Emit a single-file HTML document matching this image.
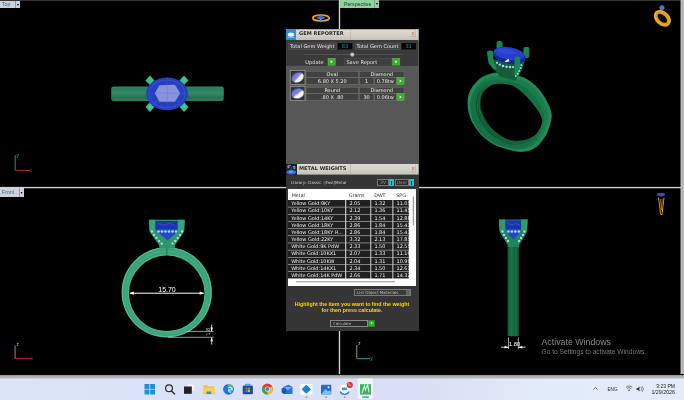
<!DOCTYPE html>
<html>
<head>
<meta charset="utf-8">
<title>Gem Reporter</title>
<style>
html,body{margin:0;padding:0;background:#000;}
body{width:684px;height:400px;overflow:hidden;position:relative;font-family:"Liberation Sans","DejaVu Sans",sans-serif;}
.abs{position:absolute;}
#scene{position:absolute;left:0;top:0;width:684px;height:400px;}
.vlabel{position:absolute;height:7px;font-size:5.2px;line-height:7px;color:#59616a;filter:blur(0.4px);background:#c9d3dc;padding-left:2px;box-sizing:border-box;white-space:nowrap;}
.vlabel i{position:absolute;right:0;top:0;width:5px;height:100%;border-left:1px solid #8e98a2;box-sizing:border-box;font-style:normal;font-size:4px;text-align:center;color:#000;}
/* panel */
#gem{position:absolute;left:286px;top:29px;width:132.5px;height:135px;background:#575757;}
#panels{position:absolute;left:0;top:0;width:684px;height:375px;filter:blur(0.35px);}
#metal{position:absolute;left:286px;top:164px;width:132.5px;height:167.3px;background:#353535;}
.tbar{position:absolute;left:0;top:0;width:133px;height:12px;}
.tbar .ic{position:absolute;left:0;top:0;width:10px;height:11px;background:#3a8fd0;}
.tbar b{position:absolute;left:13px;top:1px;font-size:5.05px;letter-spacing:0.05px;line-height:6px;color:#2a2a2a;font-weight:bold;white-space:nowrap;font-family:"DejaVu Sans","Liberation Sans",sans-serif;}
.tbar .tsplit{display:none;}
.tbar .cl{position:absolute;left:125px;top:2.3px;width:5.4px;height:5.8px;font-size:5.6px;line-height:5px;text-align:center;color:#d2514e;border-bottom:0.8px solid #c9a9a0;border-right:0.8px solid #c9b5ac;box-sizing:border-box;}
.lb{position:absolute;height:8px;line-height:7px;font-size:5.05px;color:#e4e4e4;background:#404040;border:1px solid #4e4e4e;box-sizing:border-box;white-space:nowrap;text-align:center;font-family:"DejaVu Sans","Liberation Sans",sans-serif;}
.val{position:absolute;height:8px;line-height:8px;font-size:5.05px;color:#2fa9b8;background:#050505;box-sizing:border-box;text-align:center;font-family:"DejaVu Sans",sans-serif;}
.gb{position:absolute;width:7px;height:8px;background:#36b32b;box-sizing:border-box;border:1px solid #2a8a22;}
.gb:after{content:"";position:absolute;left:1.8px;top:1px;width:0;height:0;border-left:2.2px solid #e6f8e0;border-top:1.5px solid transparent;border-bottom:1.5px solid transparent;}
.cb{position:absolute;width:5px;height:7px;background:#35b6c4;}
.cb:after{content:"";position:absolute;left:1.9px;top:1.5px;width:1.2px;height:4px;background:#0d3d55;}
.cell{position:absolute;height:8px;line-height:6.5px;font-size:5.0px;color:#ededed;background:#444;border:1px solid #6a6a6a;box-sizing:border-box;text-align:center;white-space:nowrap;font-family:"DejaVu Sans",sans-serif;}
.gicon{position:absolute;width:16px;height:16px;background:#2d2d2d;border:1px solid #9a9a9a;box-sizing:border-box;}
/* table */
#tbl{position:absolute;left:2.2px;top:25.2px;width:128.2px;height:96.4px;background:#fff;overflow:hidden;}
#tbl .hd{position:absolute;top:2.5px;font-size:4.8px;line-height:8px;color:#333;font-family:"DejaVu Sans",sans-serif;}
.row{position:absolute;left:0;width:121.5px;height:6.8px;}
.row span{position:absolute;top:0;height:6.8px;color:#f2f2f2;font-size:4.95px;line-height:6.6px;white-space:nowrap;overflow:hidden;box-sizing:border-box;padding-left:3px;font-family:"DejaVu Sans",sans-serif;}
.c1{left:0;width:57.3px;}
.c2{left:58.2px;width:24.2px;}
.c3{left:83.2px;width:21.3px;}
.c4{left:105.3px;width:15.5px;}
/* taskbar */
#task{position:absolute;left:0;top:375px;width:684px;height:25px;background:linear-gradient(90deg,#dde6f8 0%,#d9e1f7 30%,#dbdff5 62%,#e2ebf8 78%,#e3ecf8 100%);box-sizing:border-box;}
#task:before{content:"";position:absolute;left:0;top:-1px;width:684px;height:5px;background:linear-gradient(180deg,#000 0,#000 0.45px,#8e8e8e 1.1px,#a9a9a9 2px,#b9babd 4px,#d6dcea 4.9px);}
#task .t{position:absolute;font-size:5px;color:#222;white-space:nowrap;line-height:6px;}
</style>
</head>
<body>
<div id="scene">
<svg width="684" height="400" viewBox="0 0 684 400" style="position:absolute;left:0;top:0">
<defs>
<linearGradient id="bandH" x1="0" y1="0" x2="0" y2="1">
<stop offset="0" stop-color="#1f9a60"/><stop offset="0.1" stop-color="#27805a"/><stop offset="0.45" stop-color="#36896b"/><stop offset="0.8" stop-color="#266f50"/><stop offset="0.9" stop-color="#1f8a58"/><stop offset="1" stop-color="#1a7a4c"/>
</linearGradient>
<linearGradient id="bandV" x1="0" y1="0" x2="1" y2="0">
<stop offset="0" stop-color="#115837"/><stop offset="0.35" stop-color="#19774a"/><stop offset="0.55" stop-color="#14663f"/><stop offset="0.8" stop-color="#156b43"/><stop offset="1" stop-color="#0e4c2f"/>
</linearGradient>
<radialGradient id="gemT" cx="0.5" cy="0.45" r="0.6">
<stop offset="0" stop-color="#3a55d8"/><stop offset="1" stop-color="#1f35b8"/>
</radialGradient>
<filter id="bl" x="-10%" y="-10%" width="120%" height="120%"><feGaussianBlur stdDeviation="0.5"/></filter>
<filter id="bl2" x="-10%" y="-10%" width="120%" height="120%"><feGaussianBlur stdDeviation="0.35"/></filter>
</defs>
<rect width="684" height="400" fill="#000"/>
<!-- dividers -->
<rect x="0" y="0" width="684" height="0.9" fill="#3c3c3c"/>
<rect x="338.8" y="0" width="1.35" height="376" fill="#d4d4d4"/>
<rect x="0" y="186.9" width="682" height="1.35" fill="#d4d4d4"/>
<rect x="680.5" y="0" width="3.5" height="376" fill="#b9b9b9"/>

<!-- TOP VIEW ring -->
<g filter="url(#bl)">
<rect x="111.2" y="86.4" width="112.6" height="14.7" rx="2.5" fill="url(#bandH)"/>
<g fill="#3fbf8c">
<polygon points="150,75.5 154.5,80.5 150,85 145.5,80.5"/>
<polygon points="184,75.5 188.5,80.5 184,85 179.5,80.5"/>
<polygon points="150,102 154.5,107 150,112 145.5,107"/>
<polygon points="184,102 188.5,107 184,112 179.5,107"/>
</g>
<ellipse cx="167" cy="93.8" rx="21" ry="16.4" fill="#2740bd"/>
<ellipse cx="167" cy="93.8" rx="18.2" ry="13.8" fill="none" stroke="#3a53d0" stroke-width="0.9"/>
<path d="M146 93.8H188M167 77.4V110.2M152 82.5L182 105M182 82.5L152 105" stroke="#3650cc" stroke-width="0.6"/>
<polygon points="154.8,93.2 159.5,85.2 175,84.8 180.2,93.2 175,101.8 159.5,101.8" fill="#8893dc"/>
<path d="M154.8 93.2H180.2M167.3 84.8V101.8" stroke="#6f7fd6" stroke-width="0.6"/>
</g>

<!-- PERSPECTIVE ring -->
<g filter="url(#bl)">
<!--RING-->
<clipPath id="rc"><path d="M467.50 102.50 C467.61 99.79 467.92 96.46 468.75 93.75 C469.58 91.04 470.83 88.64 472.50 86.25 C474.17 83.86 476.67 81.18 478.75 79.40 C480.83 77.62 482.71 76.65 485.00 75.60 C487.29 74.55 490.42 73.62 492.50 73.10 C494.58 72.58 495.08 72.43 497.50 72.50 C499.92 72.57 503.67 72.98 507.00 73.50 C510.33 74.02 514.29 74.72 517.50 75.60 C520.71 76.47 523.33 77.18 526.25 78.75 C529.17 80.32 532.29 82.50 535.00 85.00 C537.71 87.50 540.42 90.83 542.50 93.75 C544.58 96.67 546.12 99.79 547.50 102.50 C548.88 105.21 550.08 107.58 550.80 110.00 C551.52 112.42 551.93 114.50 551.80 117.00 C551.67 119.50 550.92 122.00 550.00 125.00 C549.08 128.00 548.12 131.67 546.25 135.00 C544.38 138.33 541.46 142.40 538.75 145.00 C536.04 147.60 533.12 149.45 530.00 150.60 C526.88 151.75 523.33 152.00 520.00 151.90 C516.67 151.80 513.75 150.94 510.00 150.00 C506.25 149.06 501.04 147.71 497.50 146.25 C493.96 144.79 491.67 143.33 488.75 141.25 C485.83 139.17 482.50 136.46 480.00 133.75 C477.50 131.04 475.42 127.71 473.75 125.00 C472.08 122.29 470.94 120.00 470.00 117.50 C469.06 115.00 468.52 112.50 468.10 110.00 C467.68 107.50 467.39 105.21 467.50 102.50Z"/></clipPath>
<path d="M467.50 102.50 C467.61 99.79 467.92 96.46 468.75 93.75 C469.58 91.04 470.83 88.64 472.50 86.25 C474.17 83.86 476.67 81.18 478.75 79.40 C480.83 77.62 482.71 76.65 485.00 75.60 C487.29 74.55 490.42 73.62 492.50 73.10 C494.58 72.58 495.08 72.43 497.50 72.50 C499.92 72.57 503.67 72.98 507.00 73.50 C510.33 74.02 514.29 74.72 517.50 75.60 C520.71 76.47 523.33 77.18 526.25 78.75 C529.17 80.32 532.29 82.50 535.00 85.00 C537.71 87.50 540.42 90.83 542.50 93.75 C544.58 96.67 546.12 99.79 547.50 102.50 C548.88 105.21 550.08 107.58 550.80 110.00 C551.52 112.42 551.93 114.50 551.80 117.00 C551.67 119.50 550.92 122.00 550.00 125.00 C549.08 128.00 548.12 131.67 546.25 135.00 C544.38 138.33 541.46 142.40 538.75 145.00 C536.04 147.60 533.12 149.45 530.00 150.60 C526.88 151.75 523.33 152.00 520.00 151.90 C516.67 151.80 513.75 150.94 510.00 150.00 C506.25 149.06 501.04 147.71 497.50 146.25 C493.96 144.79 491.67 143.33 488.75 141.25 C485.83 139.17 482.50 136.46 480.00 133.75 C477.50 131.04 475.42 127.71 473.75 125.00 C472.08 122.29 470.94 120.00 470.00 117.50 C469.06 115.00 468.52 112.50 468.10 110.00 C467.68 107.50 467.39 105.21 467.50 102.50Z" fill="#1a7b4b"/>
<g clip-path="url(#rc)">
<path d="M469.44 102.95 C469.54 100.36 469.83 97.18 470.63 94.59 C471.42 92.01 472.62 89.72 474.21 87.43 C475.80 85.15 478.19 82.58 480.18 80.89 C482.17 79.19 483.96 78.26 486.15 77.26 C488.34 76.26 491.32 75.37 493.31 74.87 C495.30 74.38 495.78 74.24 498.08 74.30 C500.39 74.36 503.97 74.76 507.16 75.25 C510.34 75.75 514.12 76.42 517.18 77.26 C520.25 78.10 522.76 78.77 525.54 80.27 C528.33 81.76 531.31 83.85 533.90 86.24 C536.48 88.62 539.07 91.81 541.06 94.59 C543.05 97.38 544.51 100.36 545.84 102.95 C547.16 105.54 548.30 107.80 548.99 110.11 C549.67 112.42 550.07 114.41 549.94 116.80 C549.81 119.19 549.11 121.57 548.22 124.44 C547.34 127.30 546.43 130.80 544.64 133.99 C542.85 137.17 540.07 141.05 537.48 143.54 C534.89 146.02 532.11 147.79 529.12 148.89 C526.14 149.98 522.76 150.22 519.57 150.13 C516.39 150.03 513.60 149.21 510.02 148.31 C506.44 147.41 501.47 146.12 498.08 144.73 C494.70 143.34 492.51 141.95 489.73 139.96 C486.94 137.97 483.76 135.38 481.37 132.79 C478.99 130.21 477.00 127.02 475.40 124.44 C473.81 121.85 472.72 119.66 471.82 117.28 C470.92 114.89 470.41 112.50 470.01 110.11 C469.61 107.72 469.33 105.54 469.44 102.95Z" fill="none" stroke="#218d58" stroke-width="2.4"/>
<path d="M470.27 105.95 C470.37 103.58 470.64 100.66 471.37 98.29 C472.10 95.92 473.19 93.82 474.65 91.73 C476.11 89.64 478.30 87.29 480.12 85.74 C481.94 84.18 483.58 83.33 485.59 82.41 C487.59 81.49 490.33 80.68 492.15 80.22 C493.97 79.77 494.41 79.64 496.52 79.70 C498.64 79.76 501.92 80.12 504.84 80.58 C507.75 81.03 511.22 81.65 514.02 82.41 C516.83 83.18 519.13 83.80 521.68 85.17 C524.23 86.54 526.97 88.45 529.34 90.64 C531.71 92.83 534.08 95.74 535.90 98.29 C537.72 100.85 539.06 103.58 540.27 105.95 C541.49 108.32 542.54 110.40 543.16 112.51 C543.79 114.63 544.15 116.45 544.04 118.64 C543.92 120.83 543.27 123.01 542.46 125.64 C541.65 128.26 540.82 131.47 539.18 134.39 C537.54 137.30 534.99 140.86 532.62 143.14 C530.25 145.41 527.70 147.03 524.96 148.04 C522.23 149.04 519.13 149.26 516.21 149.18 C513.30 149.09 510.74 148.34 507.46 147.51 C504.18 146.69 499.62 145.51 496.52 144.23 C493.43 142.96 491.42 141.68 488.87 139.86 C486.32 138.03 483.40 135.66 481.21 133.29 C479.02 130.92 477.20 128.01 475.74 125.64 C474.29 123.27 473.29 121.26 472.46 119.08 C471.64 116.89 471.16 114.70 470.80 112.51 C470.44 110.33 470.18 108.32 470.27 105.95Z" fill="#176f44"/>
<path d="M475.81 103.90 C476.00 101.03 476.38 97.38 477.82 94.62 C479.26 91.87 481.79 89.13 484.44 87.36 C487.10 85.60 489.97 84.40 493.72 84.03 C497.47 83.65 503.44 84.25 506.97 85.14 C510.50 86.02 512.05 87.30 514.92 89.33 C517.79 91.35 521.32 94.40 524.20 97.28 C527.07 100.15 529.82 103.59 532.14 106.55 C534.47 109.51 536.69 112.56 538.13 115.03 C539.57 117.50 540.40 119.45 540.78 121.39 C541.17 123.33 541.24 124.31 540.47 126.69 C539.69 129.07 538.17 133.21 536.12 135.70 C534.07 138.19 531.26 140.20 528.17 141.64 C525.08 143.07 521.10 143.95 517.57 144.29 C514.04 144.62 510.50 144.64 506.97 143.65 C503.44 142.66 499.68 140.56 496.37 138.35 C493.06 136.14 489.75 133.27 487.10 130.40 C484.45 127.53 482.21 124.22 480.47 121.12 C478.73 118.03 477.43 114.72 476.65 111.85 C475.88 108.98 475.61 106.77 475.81 103.90Z" fill="#0e5231"/>
<path d="M477.40 103.45 C477.59 100.63 477.97 97.05 479.38 94.35 C480.79 91.65 483.28 88.96 485.88 87.23 C488.48 85.49 491.30 84.31 494.98 83.95 C498.66 83.59 504.51 84.18 507.98 85.04 C511.45 85.91 512.96 87.17 515.78 89.15 C518.60 91.13 522.06 94.13 524.88 96.95 C527.70 99.77 530.40 103.15 532.68 106.05 C534.96 108.95 537.14 111.94 538.56 114.37 C539.97 116.80 540.77 118.70 541.16 120.61 C541.54 122.52 541.61 123.47 540.84 125.81 C540.08 128.15 538.59 132.21 536.58 134.65 C534.57 137.09 531.81 139.07 528.78 140.47 C525.75 141.88 521.85 142.74 518.38 143.07 C514.91 143.40 511.45 143.42 507.98 142.45 C504.51 141.48 500.83 139.42 497.58 137.25 C494.33 135.08 491.08 132.27 488.48 129.45 C485.88 126.63 483.69 123.38 481.98 120.35 C480.27 117.32 479.00 114.07 478.24 111.25 C477.47 108.43 477.21 106.27 477.40 103.45Z" fill="none" stroke="#1a7647" stroke-width="0.8"/>
<path d="M479.00 103.00 C479.19 100.24 479.55 96.73 480.94 94.08 C482.33 91.42 484.76 88.79 487.31 87.09 C489.87 85.39 492.63 84.23 496.24 83.88 C499.85 83.52 505.59 84.10 508.99 84.95 C512.39 85.80 513.88 87.03 516.64 88.98 C519.40 90.92 522.80 93.86 525.57 96.62 C528.33 99.39 530.98 102.70 533.22 105.55 C535.45 108.40 537.59 111.33 538.98 113.71 C540.36 116.09 541.15 117.96 541.53 119.83 C541.90 121.70 541.97 122.64 541.22 124.93 C540.47 127.23 539.01 131.20 537.04 133.60 C535.07 136.00 532.37 137.93 529.39 139.31 C526.41 140.69 522.59 141.54 519.19 141.86 C515.79 142.19 512.39 142.20 508.99 141.25 C505.59 140.30 501.98 138.27 498.79 136.15 C495.60 134.02 492.42 131.26 489.87 128.50 C487.31 125.74 485.16 122.55 483.49 119.58 C481.82 116.60 480.57 113.41 479.82 110.65 C479.07 107.89 478.81 105.76 479.00 103.00Z" fill="none" stroke="#1a7647" stroke-width="0.8"/>
</g>
<path d="M480.60 102.50 C480.78 99.79 481.14 96.35 482.50 93.75 C483.86 91.15 486.25 88.57 488.75 86.90 C491.25 85.23 493.96 84.10 497.50 83.75 C501.04 83.40 506.67 83.97 510.00 84.80 C513.33 85.63 514.79 86.84 517.50 88.75 C520.21 90.66 523.54 93.54 526.25 96.25 C528.96 98.96 531.56 102.21 533.75 105.00 C535.94 107.79 538.04 110.67 539.40 113.00 C540.76 115.33 541.53 117.17 541.90 119.00 C542.27 120.83 542.33 121.75 541.60 124.00 C540.87 126.25 539.43 130.15 537.50 132.50 C535.57 134.85 532.92 136.75 530.00 138.10 C527.08 139.45 523.33 140.28 520.00 140.60 C516.67 140.92 513.33 140.93 510.00 140.00 C506.67 139.07 503.12 137.08 500.00 135.00 C496.88 132.92 493.75 130.21 491.25 127.50 C488.75 124.79 486.64 121.67 485.00 118.75 C483.36 115.83 482.13 112.71 481.40 110.00 C480.67 107.29 480.42 105.21 480.60 102.50Z" fill="#000"/>
<!--/RING-->
<!-- head -->
<path d="M490 58 L493 68 L500 76.5 L515 80.5 L521 72 L526 58 L519 64 L497 60Z" fill="#125c38"/>
<rect x="496.6" y="41" width="6" height="10" rx="2" fill="#1b8050"/>
<rect x="523.4" y="47" width="6" height="11" rx="2" fill="#1b8050"/>
<ellipse cx="509.6" cy="55.6" rx="16.2" ry="8.4" transform="rotate(10 509.6 55.6)" fill="#16269c"/>
<ellipse cx="509.2" cy="53.6" rx="15.6" ry="6.2" transform="rotate(9 509.2 53.6)" fill="#2541c8"/>
<ellipse cx="505.5" cy="51.2" rx="9" ry="2.6" transform="rotate(8 505.5 51.2)" fill="#2f4cd6"/>
<polygon points="504.6,61.6 508.4,58.6 509.6,61.2 506.5,62.2" fill="#e3eeff"/>
<path d="M487 52.5 Q487 50.5 490.2 50.5 Q493.4 50.5 493.4 52.5 V61 L497 68 L494 70 L488.5 63 Z" fill="#1d8552"/>
<path d="M514.6 58.6 Q514.6 56.6 517.4 56.6 Q520.2 56.6 520.2 58.6 V68 L518.5 76 L514 75 L514.6 68 Z" fill="#1d8552"/>
<g fill="#9fd8f8">
<circle cx="497" cy="62.8" r="1.1"/><circle cx="499.8" cy="64.6" r="1.2"/><circle cx="503" cy="66" r="1.25"/><circle cx="506.5" cy="66.8" r="1.25"/><circle cx="510" cy="67.1" r="1.25"/><circle cx="513" cy="67.1" r="1.1"/>
<circle cx="521.5" cy="65" r="1"/><circle cx="520.6" cy="68" r="1"/><circle cx="519.3" cy="71" r="1"/><circle cx="517.6" cy="73.8" r="1"/><circle cx="515.8" cy="76" r="0.9"/>
</g>
</g>

<!-- FRONT ring -->
<g filter="url(#bl)">
<circle cx="166.75" cy="292.3" r="45.1" fill="#37a076"/>
<circle cx="166.75" cy="292.3" r="44.4" fill="none" stroke="#55be95" stroke-width="1.2" opacity="0.9"/>
<circle cx="166.75" cy="292.8" r="41.2" fill="none" stroke="#44ad84" stroke-width="2" opacity="0.7"/>
<circle cx="166.75" cy="293.3" r="38.4" fill="none" stroke="#4bb88c" stroke-width="1.4" opacity="0.9"/>
<circle cx="166.75" cy="293.3" r="37.7" fill="#000"/>
<path d="M149 219.8 H184.7 L184 232 L175 245 L174.6 248.5 H159.4 L159 245 L149.7 232 Z" fill="#2f9669"/>
<path d="M149 219.8 H155 V231 H149.5Z M178 219.8 H184.7 L184.2 231 H178Z" fill="#34a574"/>
<path d="M155.5 221 H177.5 V230 L175 234 L167.5 240.5 L160 234 L155.5 230 Z" fill="#2746c4"/>
<rect x="155.5" y="221" width="22" height="8" fill="#1f36ae"/>
<path d="M158 223.5l6 1.5 5-1.5 6 1.8" fill="none" stroke="#3d5bd6" stroke-width="0.7"/>
<g fill="#9fdcf5"><circle cx="158.5" cy="231.5" r="1.35"/><circle cx="162" cy="231.5" r="1.35"/><circle cx="165.5" cy="231.5" r="1.35"/><circle cx="169" cy="231.5" r="1.35"/><circle cx="172.5" cy="231.5" r="1.35"/><circle cx="176" cy="231.5" r="1.35"/><circle cx="152" cy="231.5" r="1.2"/><circle cx="154" cy="235" r="1.2"/><circle cx="156.5" cy="238" r="1.2"/><circle cx="159" cy="241" r="1.2"/><circle cx="161.7" cy="243.6" r="1.2"/><circle cx="182" cy="231.5" r="1.2"/><circle cx="180" cy="235" r="1.2"/><circle cx="177.7" cy="238" r="1.2"/><circle cx="175.3" cy="241" r="1.2"/><circle cx="172.7" cy="243.6" r="1.2"/></g>
<path d="M166.9 247.5V255" stroke="#14553a" stroke-width="0.6"/>
</g>
<g filter="url(#bl2)">
<path d="M130 293.2H203.5" stroke="#fff" stroke-width="1"/>
<polygon points="129.3,293.2 133.8,291.6 133.8,294.8" fill="#fff"/>
<polygon points="204.2,293.2 199.7,291.6 199.7,294.8" fill="#fff"/>
<text x="167" y="291.5" font-family="Liberation Sans, sans-serif" font-size="7" fill="#fff" text-anchor="middle">15.70</text>
<path d="M187.6 331.4H213.7M168.2 337.3H213.7" stroke="#d8d8d8" stroke-width="0.7"/>
<path d="M211.7 324.5V331M211.7 337.7V344.5" stroke="#fff" stroke-width="0.8"/>
<polygon points="211.7,331.4 210.5,327.5 212.9,327.5" fill="#fff"/>
<polygon points="211.7,337.3 210.5,341.2 212.9,341.2" fill="#fff"/>
<text x="0" y="0" transform="translate(209.5 335.5) rotate(-90)" font-family="Liberation Sans, sans-serif" font-size="5.5" fill="#cfcfcf">1.8</text>
</g>

<!-- SIDE ring -->
<g filter="url(#bl)">
<rect x="507.6" y="244" width="11.3" height="92.2" rx="1" fill="url(#bandV)"/>
<path d="M499 219.5 H527.6 L527 232 L519.3 245 V247 H507.7 V245 L499.6 232 Z" fill="#238558"/>
<path d="M499 219.5 H505.3 V231 H499.5Z M521.3 219.5 H527.6 L527.1 231 H521.3Z" fill="#2d9c6b"/>
<path d="M505.5 220.5 H521 V230 L519 234 L513.5 239.5 L508 234 L505.5 230 Z" fill="#2746c4"/>
<rect x="505.5" y="220.5" width="15.5" height="8.5" fill="#1f36ae"/>
<path d="M507.5 223.5l4.5 1.2 3.5-1.2 4 1.4" fill="none" stroke="#3d5bd6" stroke-width="0.7"/>
<g fill="#9fdcf5"><circle cx="508.3" cy="231.5" r="1.35"/><circle cx="511.8" cy="231.5" r="1.35"/><circle cx="515.3" cy="231.5" r="1.35"/><circle cx="518.8" cy="231.5" r="1.35"/><circle cx="502.5" cy="231.5" r="1.2"/><circle cx="504" cy="235" r="1.2"/><circle cx="506" cy="238" r="1.2"/><circle cx="508" cy="241" r="1.2"/><circle cx="524.5" cy="231.5" r="1.2"/><circle cx="523" cy="235" r="1.2"/><circle cx="521" cy="238" r="1.2"/><circle cx="519" cy="241" r="1.2"/></g>
</g>
<g filter="url(#bl2)">
<path d="M508.5 337.5V349M518.3 337.5V349" stroke="#e8e8e8" stroke-width="0.7"/>
<path d="M501 347.2H508.5M518.3 347.2H525.5" stroke="#fff" stroke-width="0.8"/>
<polygon points="508.5,347.2 504.5,346 504.5,348.4" fill="#fff"/>
<polygon points="518.3,347.2 522.3,346 522.3,348.4" fill="#fff"/>
<text x="514.6" y="346" font-family="Liberation Sans, sans-serif" font-size="5.8" fill="#fff" text-anchor="middle">1.80</text>
</g>

<!-- axis icons -->
<g font-family="Liberation Sans, sans-serif" font-size="4.5" filter="url(#bl2)">
<path d="M15.2 155V170.5" stroke="#2fb0b0" stroke-width="0.8"/><path d="M15.2 170.4H30" stroke="#c02a2a" stroke-width="0.9"/>
<text x="16.6" y="157" fill="#35b8b8">y</text><text x="29.6" y="171.8" fill="#d03030">x</text>
<path d="M15.1 345.5V358.6" stroke="#c89858" stroke-width="0.9"/><path d="M15.1 358.4H31" stroke="#c0203a" stroke-width="1"/>
<text x="16.5" y="345.6" fill="#e0c090">z</text><text x="30.5" y="359.8" fill="#d02a3a">x</text>
<path d="M356.8 345V358.6" stroke="#c8a070" stroke-width="0.9"/><path d="M356.8 358.6H370" stroke="#22a8a8" stroke-width="0.9"/>
<text x="358.2" y="345.2" fill="#e0c090">z</text><text x="370.6" y="360.4" fill="#30b8c0">y</text>
</g>

<!-- small gold ring icons -->
<g filter="url(#bl2)">
<ellipse cx="321" cy="18" rx="8.2" ry="3" fill="none" stroke="#e6a417" stroke-width="1.7"/>
<ellipse cx="320.8" cy="17.6" rx="4" ry="1.7" fill="#4a6ed0"/>
<polygon points="319.3,18.5 322.3,18.5 320.8,23" fill="#5f86d8"/>
<ellipse cx="662.3" cy="18.3" rx="7.7" ry="5.1" transform="rotate(42 662.3 18.3)" fill="none" stroke="#dc9c14" stroke-width="3.9"/>
<ellipse cx="662.6" cy="18" rx="8.6" ry="6" transform="rotate(42 662.6 18)" fill="none" stroke="#f2bc2c" stroke-width="0.9"/>
<circle cx="661.9" cy="7.8" r="2.5" fill="#4f74d6"/>
<ellipse cx="661" cy="194.5" rx="4" ry="1.8" fill="#3a50b8"/>
<path d="M658.5 197.5L660.7 214.5L662 214.5L664 197.5" fill="none" stroke="#e6a417" stroke-width="0.9"/>
<path d="M660.5 199L661.3 210L662.3 199" fill="none" stroke="#e6a417" stroke-width="0.6"/>
</g>
</svg>

</div>

<div class="vlabel" style="left:0;top:1px;width:20px;">Top<i>&#9662;</i></div>
<div class="vlabel" style="left:0;top:188px;width:23.6px;height:8.7px;line-height:9px;">Front<i>&#9662;</i></div>
<div class="vlabel" style="left:340.3px;top:0;width:38.7px;height:8.3px;background:#8fd3a0;font-size:5.25px;line-height:8.6px;padding-left:3.6px;color:#1f2f25;">Perspective<i style="height:8.3px;line-height:8.3px">&#9662;</i></div>

<div id="panels">
<!-- GEM REPORTER -->
<div id="gem">
  <div class="tbar"><svg width="133" height="12" viewBox="0 0 133 12" style="position:absolute;left:0;top:0"><defs><linearGradient id="tbg" x1="0" y1="0" x2="0" y2="1"><stop offset="0" stop-color="#dedcd2"/><stop offset="0.55" stop-color="#d3d1c6"/><stop offset="1" stop-color="#c2c0b4"/></linearGradient></defs><rect x="0" y="0.4" width="132.6" height="11.1" fill="url(#tbg)"/><rect x="64.2" y="0.4" width="0.7" height="11.1" fill="#b5b2a6"/></svg><div class="ic"><svg width="10" height="11" viewBox="0 0 10 11" style="position:absolute;left:0;top:0"><rect width="10" height="11" fill="#2b8fd2"/><ellipse cx="5" cy="5.6" rx="3.2" ry="2.2" fill="#eaf6ff" filter="url(#bl2)"/><path d="M1.5 8.5h7" stroke="#7cc4f0" stroke-width="0.8"/></svg></div><b>GEM REPORTER</b><div class="cl">x</div></div>
  <div class="abs" style="left:0;top:11px;width:132px;height:26.5px;background:linear-gradient(180deg,#3a3a3a 0,#3a3a3a 25.4px,#575757 26.4px);"></div>
<svg width="132" height="135" viewBox="286 29 132 135" style="position:absolute;left:0;top:0" font-family="DejaVu Sans, Liberation Sans, sans-serif" font-size="5.05" fill="#e6e6e6">
<rect x="288.4" y="43" width="47.8" height="6.6" fill="#424242" stroke="#585858" stroke-width="0.5"/>
<rect x="337.6" y="43.2" width="14.7" height="6.3" fill="#060606"/>
<rect x="355.2" y="43" width="45.4" height="6.6" fill="#424242" stroke="#585858" stroke-width="0.5"/>
<rect x="401.4" y="43.2" width="14.6" height="6.3" fill="#060606"/>
<text x="312.3" y="48.2" text-anchor="middle">Total Gem Weight</text>
<text x="345" y="48.2" text-anchor="middle" fill="#2b95a6">83</text>
<text x="377.5" y="48.2" text-anchor="middle">Total Gem Count</text>
<text x="408.6" y="48.2" text-anchor="middle" fill="#2b95a6">31</text>
<rect x="303.4" y="54.3" width="100.3" height="0.7" fill="#5c5c5c"/>
<circle cx="352.3" cy="54.6" r="2.1" fill="#b4b4b4"/><circle cx="352.3" cy="54.6" r="0.8" fill="#e8e8e8"/>
<text x="314.5" y="64" text-anchor="middle">Update</text>
<rect x="328" y="58.4" width="7.2" height="6.8" fill="#35b22a" stroke="#63c458" stroke-width="0.5"/><path d="M330.7 60.3v3l2.2-1.5z" fill="#e6f8e0"/>
<rect x="344.7" y="58.7" width="46.8" height="6.4" fill="#3f3f3f" stroke="#555" stroke-width="0.5"/>
<text x="346.4" y="64">Save Report</text>
<rect x="392.6" y="58.5" width="7.2" height="6.6" fill="#35b22a" stroke="#63c458" stroke-width="0.5"/><path d="M395.3 60.3v3l2.2-1.5z" fill="#e6f8e0"/>
</svg>
<svg width="0" height="0" style="position:absolute"><defs><linearGradient id="gg1" x1="0.2" y1="0" x2="0.7" y2="1"><stop offset="0" stop-color="#5c68e0"/><stop offset="0.5" stop-color="#7f8af0"/><stop offset="0.62" stop-color="#ffffff"/><stop offset="1" stop-color="#e8ecff"/></linearGradient></defs></svg>
<svg width="132" height="135" viewBox="286 29 132 135" style="position:absolute;left:0;top:0" font-family="DejaVu Sans, Liberation Sans, sans-serif" font-size="5" fill="#ededed" text-anchor="middle">
<rect x="290.2" y="70.50" width="14.8" height="14" fill="#333" stroke="#a4a498" stroke-width="0.7"/>
<ellipse cx="297.7" cy="77.50" rx="6.3" ry="4.7" transform="rotate(-28 297.7 77.50)" fill="url(#gg1)" filter="url(#bl2)"/>
<rect x="306.00" y="71.20" width="52.60" height="6.50" fill="#414141" stroke="#77776f" stroke-width="0.5"/>
<rect x="359.30" y="71.20" width="44.80" height="6.50" fill="#414141" stroke="#77776f" stroke-width="0.5"/>
<rect x="306.00" y="77.70" width="52.60" height="6.50" fill="#414141" stroke="#77776f" stroke-width="0.5"/>
<rect x="359.30" y="77.70" width="14.60" height="6.50" fill="#414141" stroke="#77776f" stroke-width="0.5"/>
<rect x="374.40" y="77.70" width="21.80" height="6.50" fill="#414141" stroke="#77776f" stroke-width="0.5"/>
<text x="332.3" y="76.20">Oval</text><text x="381.7" y="76.20">Diamond</text>
<text x="332.3" y="82.70">6.80 X 5.20</text><text x="366.6" y="82.70">1</text><text x="385.3" y="82.70">0.78tw</text>
<rect x="396.9" y="77.70" width="7.2" height="6.6" fill="#35b22a" stroke="#63c458" stroke-width="0.5"/><path d="M399.6 79.50v3l2.2-1.5z" fill="#e6f8e0"/>
<rect x="290.2" y="86.50" width="14.8" height="14" fill="#333" stroke="#a4a498" stroke-width="0.7"/>
<ellipse cx="297.7" cy="93.50" rx="6.2" ry="5" transform="rotate(-15 297.7 93.50)" fill="url(#gg1)" filter="url(#bl2)"/>
<rect x="306.00" y="87.20" width="52.60" height="6.50" fill="#414141" stroke="#77776f" stroke-width="0.5"/>
<rect x="359.30" y="87.20" width="44.80" height="6.50" fill="#414141" stroke="#77776f" stroke-width="0.5"/>
<rect x="306.00" y="93.70" width="52.60" height="6.50" fill="#414141" stroke="#77776f" stroke-width="0.5"/>
<rect x="359.30" y="93.70" width="14.60" height="6.50" fill="#414141" stroke="#77776f" stroke-width="0.5"/>
<rect x="374.40" y="93.70" width="21.80" height="6.50" fill="#414141" stroke="#77776f" stroke-width="0.5"/>
<text x="332.3" y="92.20">Round</text><text x="381.7" y="92.20">Diamond</text>
<text x="332.3" y="98.70">.80 X .80</text><text x="366.6" y="98.70">30</text><text x="385.3" y="98.70">0.06tw</text>
<rect x="396.9" y="93.70" width="7.2" height="6.6" fill="#35b22a" stroke="#63c458" stroke-width="0.5"/><path d="M399.6 95.50v3l2.2-1.5z" fill="#e6f8e0"/>
</svg>
</div>

<!-- METAL WEIGHTS -->
<div id="metal">
  <div class="tbar"><svg width="133" height="12" viewBox="0 0 133 12" style="position:absolute;left:0;top:0"><rect x="0" y="-0.1" width="132.6" height="10.7" fill="url(#tbg)"/><rect x="64.2" y="-0.1" width="0.7" height="10.7" fill="#b5b2a6"/></svg><div class="ic" style="background:#242424;width:11px"><svg width="11" height="11" viewBox="0 0 11 11" style="position:absolute;left:0;top:0"><g filter="url(#bl2)"><rect x="0" y="0" width="11" height="4" fill="#1d1d1d"/><path d="M2 1.5h3M6.5 2.5h2.5" stroke="#8fa8d8" stroke-width="0.7"/><path d="M5.3 2.2L7.8 7.5H2.8z" fill="#23407f"/><path d="M1.2 2.2h2.6M1.6 3.6h1.8M7 3.2h2.6M7.6 4.6h1.6" stroke="#a9c6ee" stroke-width="0.8"/><ellipse cx="5.3" cy="8.3" rx="4.7" ry="2.2" fill="#2d6bf0"/><ellipse cx="5" cy="7.9" rx="2.4" ry="0.8" fill="#78a8f8"/></g></svg></div><b>METAL WEIGHTS</b><div class="cl">x</div></div>
  <div class="abs" style="left:5px;top:15px;font-size:4.06px;line-height:7px;color:#c8c8c8;white-space:nowrap;font-family:'DejaVu Sans',sans-serif;">Library: Classic -|Fast|Metal</div>
  <div class="lb" style="left:91px;top:15px;width:12px;height:7px;line-height:6px;font-size:4.6px;background:#2a2a2a;border-color:#777;color:#999;">3V</div>
  <div class="cb" style="left:103px;top:15px;"></div>
  <div class="lb" style="left:109px;top:15px;width:14px;height:7px;line-height:6px;font-size:4.6px;background:#2a2a2a;border-color:#777;color:#999;">User</div>
  <div class="cb" style="left:123px;top:15px;"></div>
  <div id="tbl">
<svg width="129" height="96" viewBox="0 0 129 96" style="position:absolute;left:0;top:0"><rect x="0" y="11" width="57.3" height="78.47" fill="#202020"/><rect x="58.2" y="11" width="24.2" height="78.47" fill="#202020"/><rect x="83.2" y="11" width="21.3" height="78.47" fill="#202020"/><rect x="105.3" y="11" width="15.5" height="78.47" fill="#202020"/><rect x="0" y="17.82" width="120.8" height="0.55" fill="#cfcfcf"/><rect x="0" y="24.99" width="120.8" height="0.55" fill="#cfcfcf"/><rect x="0" y="32.16" width="120.8" height="0.55" fill="#cfcfcf"/><rect x="0" y="39.33" width="120.8" height="0.55" fill="#cfcfcf"/><rect x="0" y="46.50" width="120.8" height="0.55" fill="#cfcfcf"/><rect x="0" y="53.67" width="120.8" height="0.55" fill="#cfcfcf"/><rect x="0" y="60.84" width="120.8" height="0.55" fill="#cfcfcf"/><rect x="0" y="68.01" width="120.8" height="0.55" fill="#cfcfcf"/><rect x="0" y="75.18" width="120.8" height="0.55" fill="#cfcfcf"/><rect x="0" y="82.35" width="120.8" height="0.55" fill="#cfcfcf"/><rect x="8" y="92.3" width="99" height="0.9" fill="#8a8a8a"/><rect x="124.8" y="7.5" width="1.3" height="29" fill="#9a9a9a"/></svg>
<span class="hd" style="left:3.5px;">Metal</span><span class="hd" style="left:60.5px;">Grams</span><span class="hd" style="left:86px;">DWT</span><span class="hd" style="left:108px;">SPG</span>
<div class="row" style="top:11.00px"><span class="c1">Yellow Gold:9KY</span><span class="c2">2.05</span><span class="c3">1.32</span><span class="c4">11.05</span></div>
<div class="row" style="top:18.17px"><span class="c1">Yellow Gold:10KY</span><span class="c2">2.12</span><span class="c3">1.36</span><span class="c4">11.45</span></div>
<div class="row" style="top:25.34px"><span class="c1">Yellow Gold:14KY</span><span class="c2">2.39</span><span class="c3">1.54</span><span class="c4">12.88</span></div>
<div class="row" style="top:32.51px"><span class="c1">Yellow Gold:18KY</span><span class="c2">2.86</span><span class="c3">1.84</span><span class="c4">15.43</span></div>
<div class="row" style="top:39.68px"><span class="c1">Yellow Gold:18KY R...</span><span class="c2">2.86</span><span class="c3">1.84</span><span class="c4">15.43</span></div>
<div class="row" style="top:46.85px"><span class="c1">Yellow Gold:22KY</span><span class="c2">3.32</span><span class="c3">2.13</span><span class="c4">17.85</span></div>
<div class="row" style="top:54.02px"><span class="c1">White Gold:9K PdW</span><span class="c2">2.33</span><span class="c3">1.50</span><span class="c4">12.55</span></div>
<div class="row" style="top:61.19px"><span class="c1">White Gold:10KX1</span><span class="c2">2.07</span><span class="c3">1.33</span><span class="c4">11.16</span></div>
<div class="row" style="top:68.36px"><span class="c1">White Gold:10KW</span><span class="c2">2.04</span><span class="c3">1.31</span><span class="c4">10.99</span></div>
<div class="row" style="top:75.53px"><span class="c1">White Gold:14KX1</span><span class="c2">2.34</span><span class="c3">1.50</span><span class="c4">12.61</span></div>
<div class="row" style="top:82.70px"><span class="c1">White Gold:14K PdW</span><span class="c2">2.66</span><span class="c3">1.71</span><span class="c4">14.32</span></div>
</div>
  <div class="lb" style="left:68px;top:125px;width:57px;height:7px;line-height:6px;font-size:4.06px;background:#3a3a3a;border-color:#7a7a7a;color:#bbb;text-align:left;padding-left:2px;">List Object Materials</div>
  <div class="abs" style="left:120px;top:126px;width:4px;height:5px;background:#666;"></div>
  <div class="abs" style="left:0;top:138.1px;width:132px;text-align:center;font-size:5.3px;line-height:5.95px;font-weight:bold;color:#f6d715;white-space:nowrap;">Highlight the item you want to find the weight<br>for then press calculate.</div>
  <div class="lb" style="left:44px;top:156px;width:38px;height:7px;line-height:6px;font-size:3.9px;background:#2c2c2c;border-color:#8a8a8a;color:#bbb;text-align:left;padding-left:2px;">Calculate</div>
  <div class="gb" style="left:82px;top:156px;height:7px;"></div>
</div>

</div>
<!-- Activate Windows -->
<div class="abs" style="left:541.5px;top:336.5px;font-size:8.8px;line-height:11px;color:#8a8a8a;filter:blur(0.3px);white-space:nowrap;">Activate Windows</div>
<div class="abs" style="left:541.5px;top:348px;font-size:6.63px;line-height:8px;color:#7a7a7a;filter:blur(0.3px);white-space:nowrap;">Go to Settings to activate Windows.</div>

<!-- TASKBAR -->
<div id="task">
<svg width="684" height="25" viewBox="0 375 684 25" style="position:absolute;left:0;top:0">
<defs><filter id="tb" x="-20%" y="-20%" width="140%" height="140%"><feGaussianBlur stdDeviation="0.45"/></filter><filter id="tb2" x="-5%" y="-20%" width="110%" height="140%"><feGaussianBlur stdDeviation="0.28"/></filter></defs>
<g filter="url(#tb)">
<!-- windows -->
<g fill="#1c8fe0"><rect x="144.5" y="384" width="4.9" height="4.9"/><rect x="150.1" y="384" width="4.9" height="4.9"/><rect x="144.5" y="389.6" width="4.9" height="4.9"/><rect x="150.1" y="389.6" width="4.9" height="4.9"/></g>
<!-- search -->
<circle cx="169" cy="388.3" r="3.4" fill="none" stroke="#2b2b33" stroke-width="1.2"/><path d="M171.5 391L174.5 394" stroke="#2b2b33" stroke-width="1.4" stroke-linecap="round"/>
<!-- task view -->
<rect x="187.5" y="384.3" width="6.5" height="6.5" fill="#f4f4f4"/><rect x="184" y="386.5" width="7.8" height="7.3" fill="#23232a"/>
<!-- folder -->
<path d="M203.3 385.2h4l1.2 1.3h6v7.7h-11.2z" fill="#f5bf33"/><rect x="203.3" y="387.8" width="11.2" height="6.2" fill="#fbd259"/><rect x="206.5" y="391.5" width="4.8" height="2.5" fill="#3f8ad8"/>
<!-- edge -->
<circle cx="228.5" cy="389.3" r="5.4" fill="#1b79d1"/><path d="M228 384a5.4 5.4 0 0 1 5.8 4.5l-2.6 .3a3 3 0 0 0-3.4-2.6z" fill="#4cc46e"/><path d="M228.2 388.2a2.3 2.3 0 0 1 4 1.6h-3.4a1.6 1.6 0 0 0 2.6 1.8" fill="none" stroke="#dce6f5" stroke-width="1.3"/>
<!-- store -->
<rect x="242.7" y="385.5" width="10.2" height="8.8" rx="1" fill="#1f4f9a"/><path d="M245.5 385.5v-1.2h4.6v1.2" fill="none" stroke="#2f7fd0" stroke-width="0.9"/>
<rect x="245.6" y="387.6" width="2" height="2" fill="#f25022"/><rect x="248" y="387.6" width="2" height="2" fill="#7fba00"/><rect x="245.6" y="390" width="2" height="2" fill="#00a4ef"/><rect x="248" y="390" width="2" height="2" fill="#ffb900"/>
<!-- chrome -->
<circle cx="267.4" cy="389" r="5.4" fill="#e33b2e"/><path d="M267.4 389L262.7 391.7A5.4 5.4 0 0 0 267.4 394.4z" fill="#2ca94f"/><path d="M267.4 389v5.4a5.4 5.4 0 0 0 4.7-8.1z" fill="#fbc116"/><path d="M262.7 391.7a5.4 5.4 0 0 1-.2-5l4.9 2.3z" fill="#2ca94f"/><circle cx="267.4" cy="389" r="2.6" fill="#f1f1f1"/><circle cx="267.4" cy="389" r="2" fill="#3d7ee8"/>
<!-- mail -->
<path d="M283 387l5.5-2.3 4 2.3v7h-9.5z" fill="#2a74d2"/><path d="M283 387l4.8 3.2 4.7-3.2" fill="#6fb2f2"/><rect x="281.6" y="388.3" width="4.6" height="4.6" rx="0.8" fill="#1556ae"/>
<!-- diamond app -->
<rect x="300.3" y="384" width="12" height="10.6" fill="#fdfdfd"/><polygon points="306.3,384.8 311,389.2 306.3,393.8 301.6,389.2" fill="#1481d8"/><rect x="305.5" y="396.6" width="1.6" height="1" fill="#777"/>
<!-- photos -->
<rect x="321" y="384.8" width="10.3" height="9.8" rx="1" fill="#2a6bd0"/><path d="M321 394.6l4.6-5.6 2.4 2.6 1.4-1.3 1.9 2v2.3z" fill="#7fc0f5"/><circle cx="328.6" cy="387.2" r="1" fill="#e8f2ff"/><rect x="325.4" y="396.6" width="1.6" height="1" fill="#777"/>
<!-- teams -->
<circle cx="344.6" cy="389.5" r="5.2" fill="#fafcff"/><path d="M340.2 391.5a4.8 4.8 0 0 0 8.8 0" fill="none" stroke="#2f76d6" stroke-width="1.4"/><rect x="342" y="387.6" width="5" height="2.6" fill="#4f8fe0"/>
<circle cx="349.8" cy="385" r="3" fill="#e5262b"/><rect x="343.8" y="396.6" width="1.6" height="1" fill="#777"/>
<!-- green M -->
<rect x="357.8" y="378.5" width="15.2" height="20.5" rx="1.2" fill="#f0f5fc"/><rect x="360" y="384.2" width="11" height="10.4" fill="#3fb45a"/><path d="M362 393l2.5-7 1 4 2.2-5.5 1.3 8" fill="none" stroke="#d8f3dd" stroke-width="1.1"/><rect x="362" y="396.4" width="7" height="1.3" rx="0.6" fill="#2d7fd6"/>
<!-- tray -->
<path d="M593.5 389.5l2-2 2 2" fill="none" stroke="#333" stroke-width="0.7"/>
<path d="M626 387.3a4.4 4.4 0 0 1 6.2 0M627 388.6a3 3 0 0 1 4.2 0" fill="none" stroke="#444" stroke-width="0.7"/><circle cx="629.1" cy="390.2" r="0.8" fill="#444"/>
<path d="M636.5 388h1.3l1.7-1.5v5l-1.7-1.5h-1.3z" fill="#444"/><path d="M640.8 387a2.8 2.8 0 0 1 0 4M642 386a4.3 4.3 0 0 1 0 6" fill="none" stroke="#555" stroke-width="0.6"/>
</g>
<g filter="url(#tb2)">
<text x="349.8" y="386.2" font-family="Liberation Sans, sans-serif" font-size="3.2" fill="#fff" text-anchor="middle">9+</text>
<text x="612.5" y="391.3" font-family="Liberation Sans, sans-serif" font-size="4.7" fill="#333" text-anchor="middle">ENG</text>
<text x="675" y="387.6" font-family="Liberation Sans, sans-serif" font-size="5.05" fill="#222" text-anchor="end">3:23 PM</text>
<text x="675" y="394.4" font-family="Liberation Sans, sans-serif" font-size="5.3" fill="#222" text-anchor="end">1/29/2026</text>
</g>
</svg>
</div>
</body>
</html>
